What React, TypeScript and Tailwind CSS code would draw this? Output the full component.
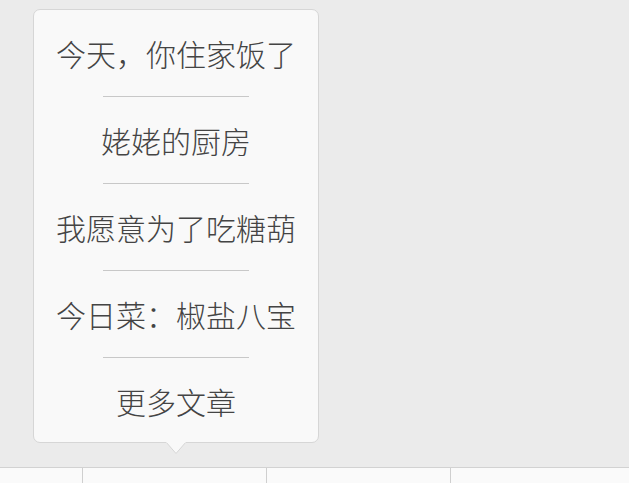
import React from 'react'

const items = ['今天，你住家饭了', '姥姥的厨房', '我愿意为了吃糖葫', '今日菜：椒盐八宝', '更多文章']

export default function App() {
    return (
        <div
            className="w-[629px] h-[483px] bg-[#ebebeb] flex flex-col overflow-hidden"
            style={{ fontFamily: '"Noto Sans CJK SC", "Noto Sans", sans-serif' }}
        >
            {/* Popup menu */}
            <div className="flex-1 pt-[9px] pl-[33px]">
                <div className="relative w-[286px]">
                    <div className="w-[286px] h-[434px] bg-[#f9f9f9] border border-[#d6d6d6] rounded-[7px] flex flex-col">
                        {items.map((label, i) => (
                            <React.Fragment key={label}>
                                {i > 0 && <div className="w-[146px] h-px bg-[#c8c8c8] mx-auto shrink-0" />}
                                <div className="h-[86px] shrink-0 flex items-center justify-center text-[30px] font-light text-[#444444] leading-none">
                                    {label}
                                </div>
                            </React.Fragment>
                        ))}
                    </div>
                    <svg
                        className="absolute left-[133px] top-[432px]"
                        width="20"
                        height="14"
                        viewBox="0 0 20 14"
                        aria-hidden="true"
                    >
                        <path d="M0 1 L10 12.5 L20 1" fill="#f9f9f9" stroke="#d6d6d6" strokeWidth="1" />
                        <rect x="0" y="0" width="20" height="1.5" fill="#f9f9f9" />
                    </svg>
                </div>
            </div>

            {/* Bottom menu bar */}
            <div className="h-[16px] shrink-0 bg-[#fafafa] border-t border-[#d2d2d2] flex">
                <div className="w-[83px] border-r border-[#cfcfcf]" />
                <div className="w-[184px] border-r border-[#cfcfcf]" />
                <div className="w-[184px] border-r border-[#cfcfcf]" />
                <div className="flex-1" />
            </div>
        </div>
    )
}
